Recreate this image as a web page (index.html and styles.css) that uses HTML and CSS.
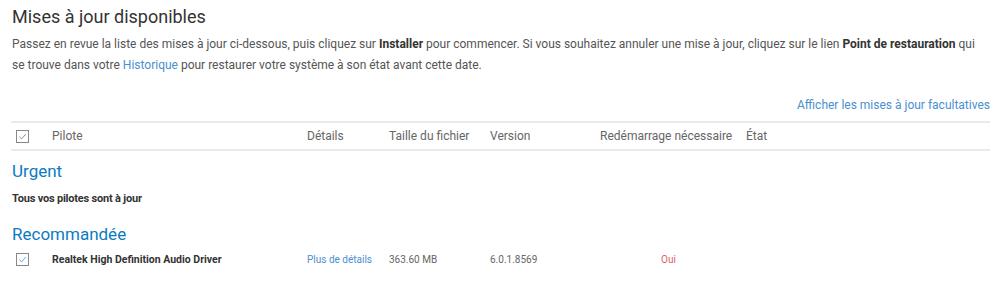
FILE: index.html
```html
<!DOCTYPE html>
<html lang="fr">
<head>
<meta charset="utf-8">
<title>Mises à jour disponibles</title>
<link rel="stylesheet" href="styles.css">
</head>
<body>
<main class="page">
  <h1 class="title">Mises à jour disponibles</h1>
  <p class="intro">Passez en revue la liste des mises à jour ci-dessous, puis cliquez sur <b>Installer</b> pour commencer. Si vous souhaitez annuler une mise à jour, cliquez sur le lien <b>Point de restauration</b> qui se trouve dans votre <a class="link" href="#">Historique</a> pour restaurer votre système à son état avant cette date.</p>
  <div class="optional"><a class="link" href="#">Afficher les mises à jour facultatives</a></div>
  <div class="grid head">
    <span class="cell"><span class="check"><svg viewBox="0 0 12 12" width="12" height="12"><path d="M2.5 6.2 L5 8.6 L9.6 3.4" fill="none" stroke="#777" stroke-width="0.9"/></svg></span></span>
    <span class="cell">Pilote</span>
    <span class="cell">Détails</span>
    <span class="cell">Taille du fichier</span>
    <span class="cell">Version</span>
    <span class="cell">Redémarrage nécessaire</span>
    <span class="cell">État</span>
  </div>
  <h2 class="section">Urgent</h2>
  <p class="note">Tous vos pilotes sont à jour</p>
  <h2 class="section sec2">Recommandée</h2>
  <div class="grid row">
    <span class="cell"><span class="check"><svg viewBox="0 0 12 12" width="12" height="12"><path d="M2.5 6.2 L5 8.6 L9.6 3.4" fill="none" stroke="#4a8fd0" stroke-width="0.9"/></svg></span></span>
    <span class="cell name">Realtek High Definition Audio Driver</span>
    <span class="cell"><a class="link" href="#">Plus de détails</a></span>
    <span class="cell">363.60 MB</span>
    <span class="cell">6.0.1.8569</span>
    <span class="cell restart">Oui</span>
    <span class="cell"></span>
  </div>
</main>
</body>
</html>
```

FILE: styles.css
```css
* { box-sizing: border-box; }
html, body { margin: 0; padding: 0; background: #fff; }
body { font-family: Roboto, "Liberation Sans", Arial, sans-serif; color: #555; }
.page { padding: 5px 8px 0 11px; }
.title { margin: 0; font-size: 18px; font-weight: 400; line-height: 24px; color: #333; padding-left: 1px; }
.intro { margin: 5px 0 0 1px; font-size: 12px; line-height: 21px; color: #555; }
.intro b { color: #333; font-weight: 700; }
.link { color: #4a8fd0; text-decoration: none; }
.optional { text-align: right; margin-top: 20px; font-size: 12px; line-height: 18px; }
.grid { display: grid; grid-template-columns: 41px 255px 82px 101px 110px 146px 1fr; align-items: center; }
.head { margin-top: 7px; border-top: 2px solid #ebe9ed; border-bottom: 2px solid #ebe9ed; height: 30px; font-size: 12px; color: #666; }
.check { display: inline-block; width: 13px; height: 13px; border: 1px solid #888; margin-left: 5px; vertical-align: middle; }
.check svg { display: block; width: 11px; height: 11px; }
.section { margin: 9px 0 0 1px; font-size: 17px; font-weight: 400; line-height: 22px; color: #0b7bc1; }
.note { margin: 10px 0 0 1px; font-size: 11px; font-weight: 700; line-height: 14px; color: #333; letter-spacing: -0.2px; }
.sec2 { margin-top: 17px; }
.row { margin-top: 3px; height: 22px; font-size: 10px; color: #666; }
.name { font-weight: 700; font-size: 10.5px; color: #333; }
.restart { color: #e06060; padding-left: 61px; }
```
